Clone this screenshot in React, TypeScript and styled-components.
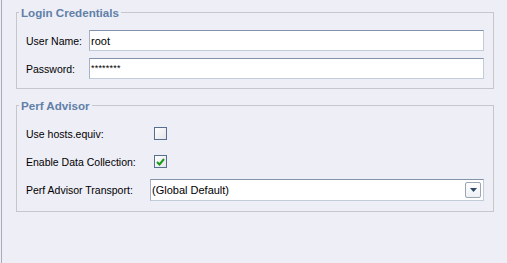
import React from "react"
import styled, { createGlobalStyle } from "styled-components"

const GlobalStyle = createGlobalStyle`
  html, body {
    margin: 0;
    background: #eeeef6;
  }
  body {
    font-family: "Liberation Sans", Arial, sans-serif;
    font-size: 10.5px;
    color: #000;
  }
`

const Panel = styled.div`
  box-sizing: border-box;
  width: 506px;
  height: 263px;
  margin-left: 1px;
  border-left: 1px solid #a9a9bb;
  padding: 6px 13px 0 14px;
  display: flex;
  flex-direction: column;
  gap: 10px;
`

const Group = styled.fieldset<{ $bottom: number }>`
  box-sizing: border-box;
  width: 478px;
  min-width: 0;
  margin: 0;
  padding: 11px 9px ${({ $bottom }) => $bottom}px;
  border: 1px solid #c6c6cc;
`

const Legend = styled.legend`
  margin-left: -7px;
  padding: 0 2px;
  font-weight: bold;
  font-size: 11.6px;
  line-height: 13px;
  color: #6080a8;
`

const Form = styled.div<{ $labelWidth: number }>`
  display: grid;
  grid-template-columns: ${({ $labelWidth }) => $labelWidth}px 1fr;
  grid-auto-rows: 21px;
  row-gap: 7px;
  align-items: center;
`

const Label = styled.label`
  white-space: nowrap;
`

const TextInput = styled.div`
  box-sizing: border-box;
  height: 21px;
  background: #fff;
  border: 1px solid #c0ccd8;
  border-top-color: #8393aa;
  border-left-color: #a6b2c2;
  padding: 0 1px;
  display: flex;
  align-items: center;
  font-size: 11px;
`

const Mask = styled.span`
  font-size: 9px;
  letter-spacing: 0.2px;
  position: relative;
  top: -1px;
`

const Box = styled.div`
  box-sizing: border-box;
  width: 13px;
  height: 13px;
  margin-left: 4px;
  border: 1px solid #54708e;
  background: linear-gradient(135deg, #ffffff 0%, #e4e4ea 100%);
  display: flex;
  align-items: center;
  justify-content: center;
`

const Select = styled(TextInput)`
  height: 22px;
  align-self: start;
  justify-content: space-between;
  padding-right: 2px;
`

const DropButton = styled.div`
  box-sizing: border-box;
  width: 16px;
  height: 16px;
  border: 1px solid #9ca6b2;
  border-radius: 2px;
  background: linear-gradient(#ffffff, #eef0f4);
  display: flex;
  align-items: center;
  justify-content: center;
`

const CheckBox = ({ checked }: { checked?: boolean }) => (
  <Box>
    {checked && (
      <svg width="9" height="8" viewBox="0 0 9 8">
        <path d="M1 4 L3.5 6.5 L8 1" fill="none" stroke="#1a9a1a" strokeWidth="2" />
      </svg>
    )}
  </Box>
)

const App = () => (
  <>
    <GlobalStyle />
    <Panel>
      <Group $bottom={9}>
        <Legend>Login Credentials</Legend>
        <Form $labelWidth={63}>
          <Label>User Name:</Label>
          <TextInput>root</TextInput>
          <Label>Password:</Label>
          <TextInput>
            <Mask>********</Mask>
          </TextInput>
        </Form>
      </Group>
      <Group $bottom={11}>
        <Legend>Perf Advisor</Legend>
        <Form $labelWidth={124}>
          <Label>Use hosts.equiv:</Label>
          <CheckBox />
          <Label>Enable Data Collection:</Label>
          <CheckBox checked />
          <Label>Perf Advisor Transport:</Label>
          <Select>
            <span>(Global Default)</span>
            <DropButton>
              <svg width="7" height="4" viewBox="0 0 7 4">
                <path d="M0 0 H7 L3.5 4 Z" fill="#2c4866" />
              </svg>
            </DropButton>
          </Select>
        </Form>
      </Group>
    </Panel>
  </>
)

export default App
